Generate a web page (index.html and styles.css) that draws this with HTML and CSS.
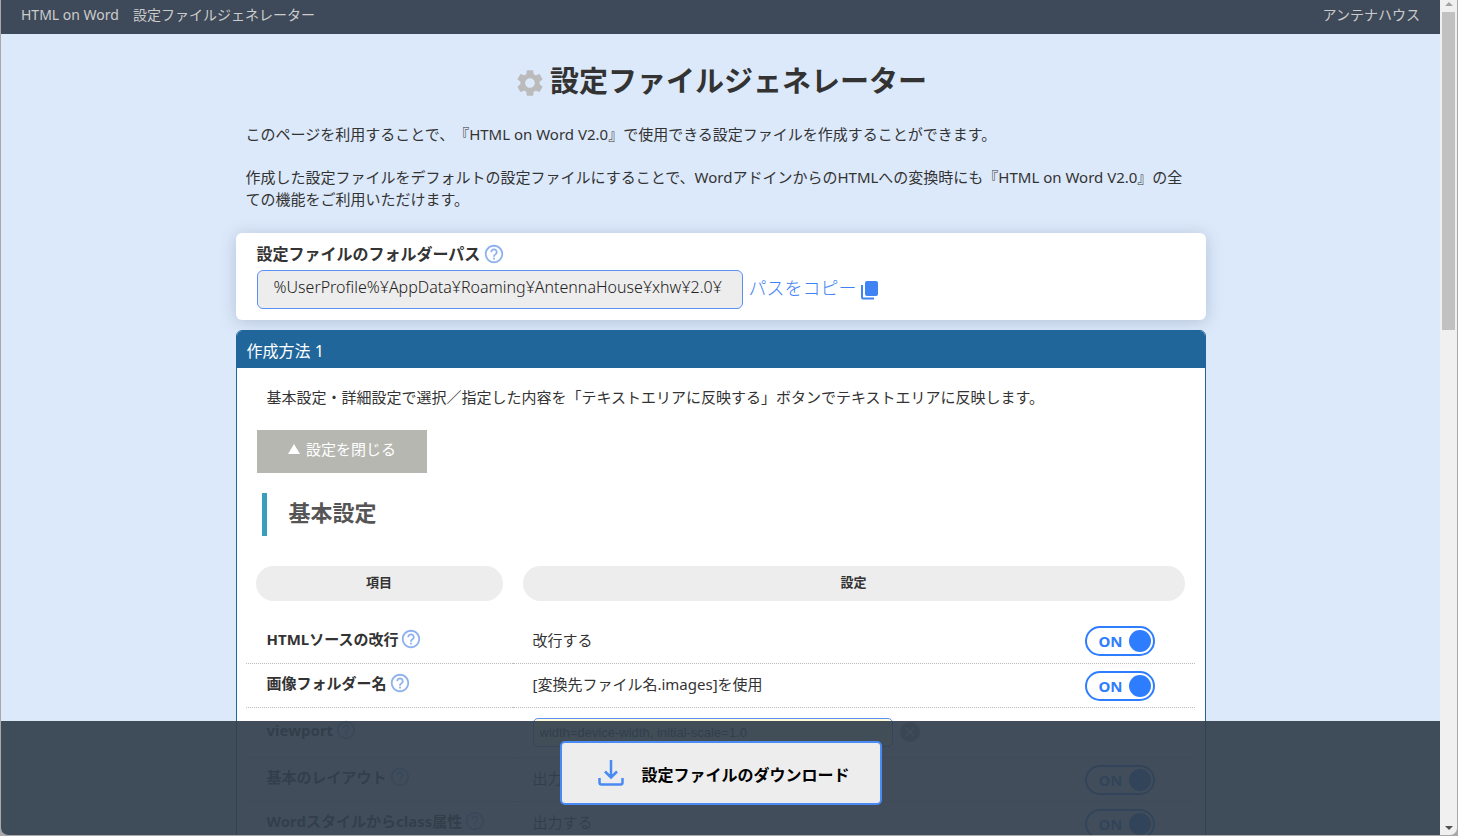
FILE: index.html
```html
<!DOCTYPE html>
<html lang="ja">
<head>
<meta charset="utf-8">
<title>設定ファイルジェネレーター</title>
<link rel="stylesheet" href="styles.css">
</head>
<body>
<svg class="sprite" aria-hidden="true">
  <symbol id="help" viewBox="0 0 24 24">
    <path fill="currentColor" d="M11 18h2v-2h-2v2zm1-16C6.480 2 2 6.480 2 12s4.480 10 10 10 10-4.480 10-10S17.520 2 12 2zm0 18c-4.410 0-8-3.590-8-8s3.590-8 8-8 8 3.590 8 8-3.590 8-8 8zm0-14c-2.210 0-4 1.790-4 4h2c0-1.100.9-2 2-2s2 .9 2 2c0 2-3 1.750-3 5h2c0-2.250 3-2.500 3-5 0-2.210-1.790-4-4-4z"/>
  </symbol>
</svg>
<div class="window">
  <div class="page">
    <header class="topbar">
      <a href="#top">HTML on Word　設定ファイルジェネレーター</a>
      <a href="#company">アンテナハウス</a>
    </header>
    <main class="content" id="top">
      <h1 class="title">
        <svg class="gear" viewBox="0 0 24 24" aria-hidden="true"><path fill="currentColor" d="M19.140 12.940c.04-.3.060-.61.060-.94 0-.32-.02-.64-.07-.94l2.030-1.580c.18-.14.230-.41.120-.61l-1.920-3.320c-.12-.22-.37-.29-.59-.22l-2.390.96c-.5-.38-1.030-.7-1.620-.94l-.36-2.540c-.04-.24-.24-.41-.48-.41h-3.840c-.24 0-.43.17-.47.41l-.36 2.540c-.59.24-1.130.57-1.620.94l-2.390-.96c-.22-.08-.47 0-.59.22L2.740 8.870c-.12.21-.08.47.120.61l2.030 1.580c-.05.3-.09.63-.09.94s.02.64.070.94l-2.030 1.580c-.18.14-.23.41-.12.61l1.920 3.320c.12.22.37.29.59.22l2.390-.96c.5.38 1.030.7 1.620.94l.36 2.540c.05.24.24.41.48.41h3.840c.24 0 .44-.17.47-.41l.36-2.540c.59-.24 1.130-.56 1.620-.94l2.390.96c.22.08.47 0 .59-.22l1.920-3.320c.12-.22.070-.47-.12-.61l-2.010-1.580zM12 15.600c-1.980 0-3.600-1.620-3.600-3.600s1.620-3.600 3.600-3.600 3.600 1.620 3.600 3.600-1.620 3.600-3.600 3.600z"/></svg>
        設定ファイルジェネレーター
      </h1>
      <div class="intro">
        <p>このページを利用することで、『HTML on Word V2.0』で使用できる設定ファイルを作成することができます。</p>
        <p>作成した設定ファイルをデフォルトの設定ファイルにすることで、WordアドインからのHTMLへの変換時にも『HTML on Word V2.0』の全ての機能をご利用いただけます。</p>
      </div>
      <section class="pathcard">
        <div class="pathlabel"><label for="path">設定ファイルのフォルダーパス</label><svg class="help"><use href="#help"/></svg></div>
        <div class="pathrow">
          <input class="path" id="path" type="text" readonly value="%UserProfile%¥AppData¥Roaming¥AntennaHouse¥xhw¥2.0¥">
          <button class="copy" type="button">パスをコピー<svg viewBox="0 0 18 20" aria-hidden="true"><rect x="4" y="1" width="13" height="15" rx="2" fill="currentColor"/><path d="M1 5v12.500q0 1 1 1h11" fill="none" stroke="currentColor" stroke-width="2"/></svg></button>
        </div>
      </section>
      <section class="method">
        <h2 class="methodtitle">作成方法 1</h2>
        <div class="methodbody">
          <p class="lead">基本設定・詳細設定で選択／指定した内容を「テキストエリアに反映する」ボタンでテキストエリアに反映します。</p>
          <button class="fold" type="button"><svg viewBox="0 0 12 10" aria-hidden="true"><path d="M6 0l6 10H0z" fill="currentColor"/></svg>設定を閉じる</button>
          <h3 class="group">基本設定</h3>
          <table class="settings">
            <colgroup><col class="namecol"><col></colgroup>
            <thead>
              <tr><th scope="col"><span class="pill">項目</span></th><th scope="col"><span class="pill">設定</span></th></tr>
            </thead>
            <tbody>
              <tr>
                <th scope="row"><span class="name">HTMLソースの改行<svg class="help"><use href="#help"/></svg></span></th>
                <td><div class="value"><span class="state">改行する</span><label class="toggle">ON<input type="checkbox" checked></label></div></td>
              </tr>
              <tr>
                <th scope="row"><span class="name">画像フォルダー名<svg class="help"><use href="#help"/></svg></span></th>
                <td><div class="value"><span class="state">[変換先ファイル名.images]を使用</span><label class="toggle">ON<input type="checkbox" checked></label></div></td>
              </tr>
              <tr class="tall">
                <th scope="row"><label class="name" for="viewport">viewport<svg class="help"><use href="#help"/></svg></label></th>
                <td><div class="field"><input class="viewport" id="viewport" type="text" value="width=device-width, initial-scale=1.0"><button class="clear" type="button" aria-label="クリア"><svg viewBox="0 0 20 20" aria-hidden="true"><circle cx="10" cy="10" r="10" fill="#999"/><path d="M6 6l8 8M14 6l-8 8" stroke="#fff" stroke-width="1.500"/></svg></button></div></td>
              </tr>
              <tr>
                <th scope="row"><span class="name">基本のレイアウト<svg class="help"><use href="#help"/></svg></span></th>
                <td><div class="value"><span class="state">出力する</span><label class="toggle">ON<input type="checkbox" checked></label></div></td>
              </tr>
              <tr>
                <th scope="row"><span class="name">Wordスタイルからclass属性<svg class="help"><use href="#help"/></svg></span></th>
                <td><div class="value"><span class="state">出力する</span><label class="toggle">ON<input type="checkbox" checked></label></div></td>
              </tr>
            </tbody>
          </table>
        </div>
      </section>
    </main>
    <footer class="dock">
      <button class="download" type="button"><svg viewBox="0 0 26 26" aria-hidden="true"><g fill="none" stroke="currentColor" stroke-width="2.500"><path d="M13 0v17M7 11.500l6 6 6-6" /><path d="M1.500 18v4.500q0 2 2 2h19q2 0 2-2V18"/></g></svg><span>設定ファイルのダウンロード</span></button>
    </footer>
  </div>
  <div class="scrollbar" aria-hidden="true">
    <svg class="arrow up" viewBox="0 0 8 4"><path d="M4 0l4 4H0z"/></svg>
    <div class="thumb"></div>
    <svg class="arrow down" viewBox="0 0 8 4"><path d="M0 0h8L4 4z"/></svg>
  </div>
</div>
</body>
</html>
```
FILE: styles.css
```css
* {
  box-sizing: border-box;
}

body {
  margin: 0;
  background: #a9a9a9;
  color: #333;
  font-family: "Noto Sans", "Noto Sans CJK JP", sans-serif;
  font-size: 15px;
  line-height: 22px;
  text-spacing-trim: space-all;
}

h1, h2, h3, p {
  margin: 0;
}

button, input {
  font-family: inherit;
  margin: 0;
}

.sprite {
  display: none;
}

.window {
  display: flex;
  height: 100vh;
  border: solid #a9a9a9;
  border-width: 0 1px 1px;
  border-radius: 0 0 8px 8px;
  overflow: hidden;
}

.page {
  position: relative;
  flex: 1;
  overflow: hidden;
  background: #dce9fa;
}

.topbar {
  display: flex;
  justify-content: space-between;
  padding: 4px 20px 8px;
  background: #3e4a59;
  font-size: 14px;
}

.topbar a {
  color: #ccc;
  text-decoration: none;
}

.content {
  max-width: 970px;
  margin: 0 auto;
}

.title {
  display: flex;
  align-items: center;
  justify-content: center;
  gap: 4px;
  padding-top: 25px;
  font-size: 29px;
  line-height: 44px;
}

.gear {
  width: 32px;
  height: 32px;
  margin-top: 4px;
  color: #bbb;
}

.intro {
  display: grid;
  gap: 21px;
  padding: 20px 10px 23px;
}

.pathcard {
  padding: 10px 21px 11px;
  border-radius: 6px;
  background: #fff;
  box-shadow: 0 2px 16px rgba(60, 80, 120, 0.25);
}

.pathlabel {
  display: flex;
  align-items: center;
  gap: 3px;
  padding-bottom: 5px;
  font-size: 16px;
  font-weight: 700;
}

.help {
  width: 22px;
  height: 22px;
  color: #8fb2ee;
}

.pathrow {
  display: flex;
  align-items: center;
  gap: 6px;
}

.path {
  width: 486px;
  height: 39px;
  padding: 0 16px 6px;
  border: 1px solid #5b8ff5;
  border-radius: 6px;
  background: #ededed;
  color: #222;
  font-size: 16px;
  font-weight: 300;
}

.copy {
  display: flex;
  align-items: center;
  gap: 4px;
  padding: 0 0 4px;
  border: 0;
  background: none;
  color: #3f82f4;
  font-size: 18px;
  font-weight: 300;
  line-height: 24px;
}

.copy svg {
  width: 18px;
  height: 20px;
  margin-top: 5px;
}

.method {
  margin-top: 10px;
  border: 1px solid #21669a;
  border-radius: 6px;
  background: #fff;
  overflow: hidden;
}

.methodtitle {
  padding: 9px 10px 6px;
  background: #21669a;
  color: #fff;
  font-size: 16px;
  font-weight: 400;
}

.methodbody {
  padding: 18px 10px 0 9px;
}

.lead {
  padding: 0 21px;
}

.fold {
  display: flex;
  align-items: center;
  justify-content: center;
  gap: 6px;
  width: 170px;
  height: 43px;
  margin: 22px 11px 20px;
  padding: 0 0 6px 1px;
  border: 0;
  background: #b7b7b1;
  color: #fff;
  font-size: 15px;
}

.fold svg {
  width: 12px;
  height: 10px;
}

.group {
  margin: 0 16px 20px;
  padding: 3px 22px 8px;
  border-left: 5px solid #379fbd;
  color: #555;
  font-size: 22px;
  line-height: 32px;
}

.settings {
  width: 100%;
  border-collapse: collapse;
  table-layout: fixed;
}

.namecol {
  width: 267px;
}

.settings th, .settings td {
  padding: 0;
  text-align: left;
}

.pill {
  display: block;
  margin: 10px 10px 18px;
  padding: 5px 0 8px;
  border-radius: 18px;
  background: #ededed;
  font-size: 13px;
  text-align: center;
}

tbody tr {
  height: 44px;
  border-bottom: 1px dotted #bbb;
}

tbody .tall {
  height: 50px;
}

.name {
  display: flex;
  align-items: center;
  gap: 2px;
  padding: 0 21px 4px;
}

.value {
  display: flex;
  align-items: center;
  justify-content: space-between;
  padding: 1px 40px 0 20px;
}

.state {
  padding-bottom: 3px;
}

.toggle {
  display: flex;
  align-items: center;
  justify-content: space-between;
  width: 70px;
  height: 30px;
  padding: 0 2px 0 12px;
  border: 2px solid #2f7dff;
  border-radius: 15px;
  background: #fff;
  color: #2f7dff;
  font-size: 15px;
  font-weight: 700;
}

.toggle input {
  width: 22px;
  height: 22px;
  border-radius: 50%;
  background: #2f7dff;
  appearance: none;
}

.field {
  display: flex;
  align-items: center;
  gap: 7px;
  padding: 0 20px;
}

.viewport {
  width: 360px;
  height: 29px;
  padding: 0 6px;
  border: 1px solid #5b8ff5;
  border-radius: 5px;
  background: #fffbd6;
  color: #333;
  font-family: "Liberation Sans", sans-serif;
  font-size: 13px;
}

.clear {
  display: flex;
  padding: 0;
  border: 0;
  background: none;
}

.clear svg {
  width: 20px;
  height: 20px;
}

.dock {
  position: absolute;
  right: 0;
  bottom: 0;
  left: 0;
  display: flex;
  justify-content: center;
  padding: 20px 0 30px;
  background: rgba(51, 63, 78, 0.93);
}

.download {
  display: flex;
  align-items: center;
  justify-content: center;
  gap: 17px;
  width: 322px;
  height: 64px;
  padding: 0 10px 0 17px;
  border: 2px solid #4a8af4;
  border-radius: 5px;
  background: #ededed;
  color: #000;
  font-size: 16px;
  font-weight: 700;
}

.download span {
  padding-top: 2px;
}

.download svg {
  width: 26px;
  height: 26px;
  color: #4a8af4;
}

.scrollbar {
  display: flex;
  flex-direction: column;
  align-items: center;
  width: 17px;
  padding: 2px 0 5px;
  background: #f0f0f0;
}

.thumb {
  width: 13px;
  height: 38vh;
  margin-top: 6px;
  background: #c1c1c1;
}

.arrow {
  width: 8px;
  height: 4px;
  fill: #505050;
}

.up {
  fill: #a3a3a3;
}

.down {
  margin-top: auto;
}
```
